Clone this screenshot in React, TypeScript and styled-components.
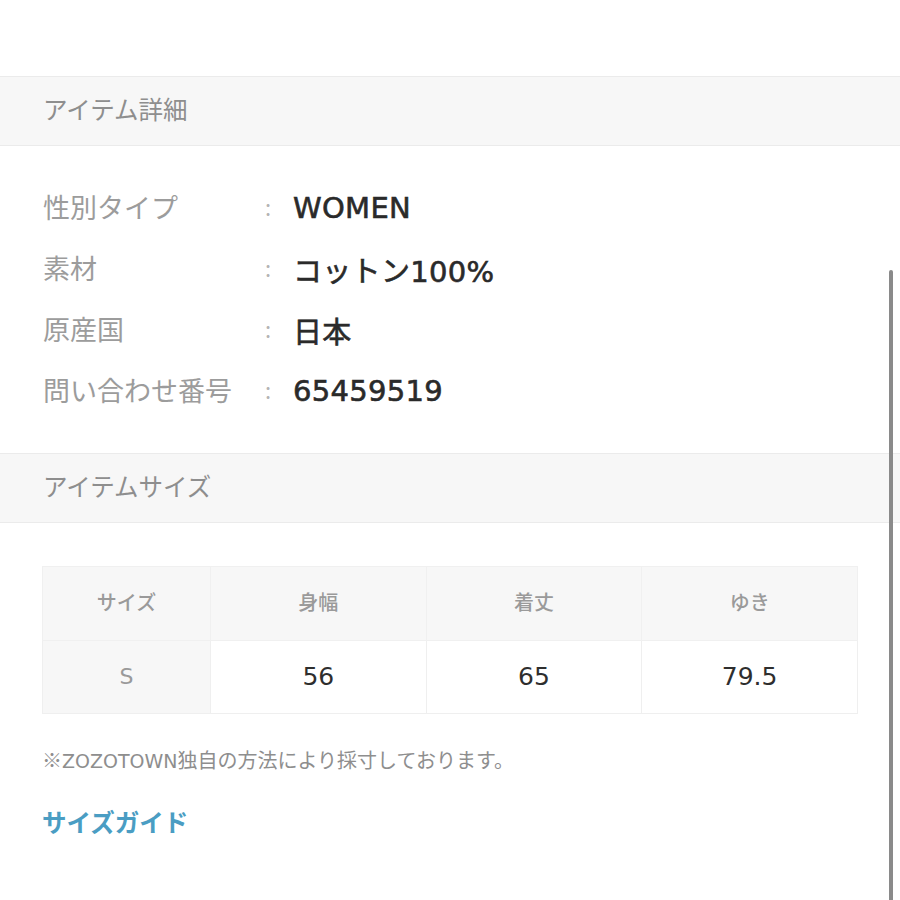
import React from "react";
import styled, { createGlobalStyle } from "styled-components";

const GlobalStyle = createGlobalStyle`
  html, body {
    margin: 0;
    padding: 0;
    background: #ffffff;
  }
  body {
    font-family: "Noto Sans CJK JP", "Noto Sans", sans-serif;
    -webkit-font-smoothing: antialiased;
  }
`;

// latin glyphs in the reference are wide (Hiragino-like), DejaVu is the closest fit
const latinStack = `"DejaVu Sans", "Noto Sans CJK JP", sans-serif`;

interface DetailItem {
  label: string
  value: string
}

const DETAILS: DetailItem[] = [
  { label: "性別タイプ", value: "WOMEN" },
  { label: "素材", value: "コットン100%" },
  { label: "原産国", value: "日本" },
  { label: "問い合わせ番号", value: "65459519" },
];

const SIZE_HEADERS = ["サイズ", "身幅", "着丈", "ゆき"];
const SIZE_ROWS = [["S", "56", "65", "79.5"]];

const Page = styled.div`
  position: relative;
  width: 900px;
  min-height: 900px;
  padding-top: 76px;
  box-sizing: border-box;
  overflow: hidden;
`;

const SectionHeader = styled.div`
  display: flex;
  align-items: center;
  height: 63px;
  padding: 0 0 5px 43px;
  background: #f7f7f7;
  border-top: 1px solid #ebebeb;
  border-bottom: 1px solid #ebebeb;
  font-size: 24.5px;
  color: #8e8e8e;
`;

const DetailList = styled.dl`
  margin: 0;
  padding: 31px 0 32px 43px;
`;

const DetailRow = styled.div`
  display: grid;
  grid-template-columns: 220px 30px 1fr;
  align-items: center;
  height: 61px;
`;

const DetailLabel = styled.dt`
  font-size: 27px;
  color: #9c9c9c;
  white-space: nowrap;
  padding-bottom: 3px;
`;

const Colon = styled.span`
  font-size: 22px;
  color: #b4b4b4;
  padding: 0 0 3px 2px;
`;

const DetailValue = styled.dd`
  margin: 0;
  font-family: ${latinStack};
  font-size: 29px;
  letter-spacing: 0.3px;
  color: #2a2a2a;
  -webkit-text-stroke: 0.6px #2a2a2a;
  white-space: nowrap;
`;

const SizeArea = styled.div`
  padding: 43px 42px 0 42px;
`;

const SizeTable = styled.table`
  width: 816px;
  border-collapse: collapse;
  table-layout: fixed;
`;

const HeadCell = styled.th<{ $first?: boolean }>`
  width: ${(p) => (p.$first ? "167px" : "auto")};
  height: 69px;
  background: #f7f7f7;
  border: 1px solid #f0f0f0;
  font-size: 20px;
  font-weight: 500;
  color: #9a9a9a;
  text-align: center;
  padding: 0 0 4px 0;
`;

const BodyCell = styled.td<{ $first?: boolean }>`
  height: 70px;
  background: ${(p) => (p.$first ? "#f7f7f7" : "#ffffff")};
  border: 1px solid #efefef;
  border-top-color: ${(p) => (p.$first ? "#ffffff" : "#efefef")};
  font-family: ${latinStack};
  font-size: ${(p) => (p.$first ? "22px" : "25px")};
  color: ${(p) => (p.$first ? "#9a9a9a" : "#2e2e2e")};
  text-align: center;
  padding: 0 0 2px 0;
`;

const Note = styled.p`
  margin: 31px 0 0 0;
  line-height: 30px;
  font-size: 20px;
  color: #8e8e8e;
`;

const NoteLatin = styled.span`
  font-family: ${latinStack};
  font-size: 19px;
`;

const GuideLink = styled.a`
  display: inline-block;
  margin-top: 31px;
  line-height: 30px;
  font-size: 24.5px;
  font-weight: 700;
  color: #4a9dc3;
  text-decoration: none;
`;

const ScrollIndicator = styled.div`
  position: absolute;
  top: 270px;
  left: 889px;
  width: 4px;
  height: 640px;
  border-radius: 2px;
  background: #8a8a8a;
`;

const App = () => {
  return (
    <>
      <GlobalStyle />
      <Page>
        <SectionHeader>アイテム詳細</SectionHeader>
        <DetailList>
          {DETAILS.map((item) => (
            <DetailRow key={item.label}>
              <DetailLabel>{item.label}</DetailLabel>
              <Colon>:</Colon>
              <DetailValue>{item.value}</DetailValue>
            </DetailRow>
          ))}
        </DetailList>

        <SectionHeader>アイテムサイズ</SectionHeader>
        <SizeArea>
          <SizeTable>
            <thead>
              <tr>
                {SIZE_HEADERS.map((h, i) => (
                  <HeadCell key={h} $first={i === 0}>{h}</HeadCell>
                ))}
              </tr>
            </thead>
            <tbody>
              {SIZE_ROWS.map((row) => (
                <tr key={row[0]}>
                  {row.map((v, i) => (
                    <BodyCell key={i} $first={i === 0}>{v}</BodyCell>
                  ))}
                </tr>
              ))}
            </tbody>
          </SizeTable>
          <Note>※<NoteLatin>ZOZOTOWN</NoteLatin>独自の方法により採寸しております。</Note>
          <GuideLink href="#">サイズガイド</GuideLink>
        </SizeArea>
        <ScrollIndicator />
      </Page>
    </>
  );
};

export default App;
